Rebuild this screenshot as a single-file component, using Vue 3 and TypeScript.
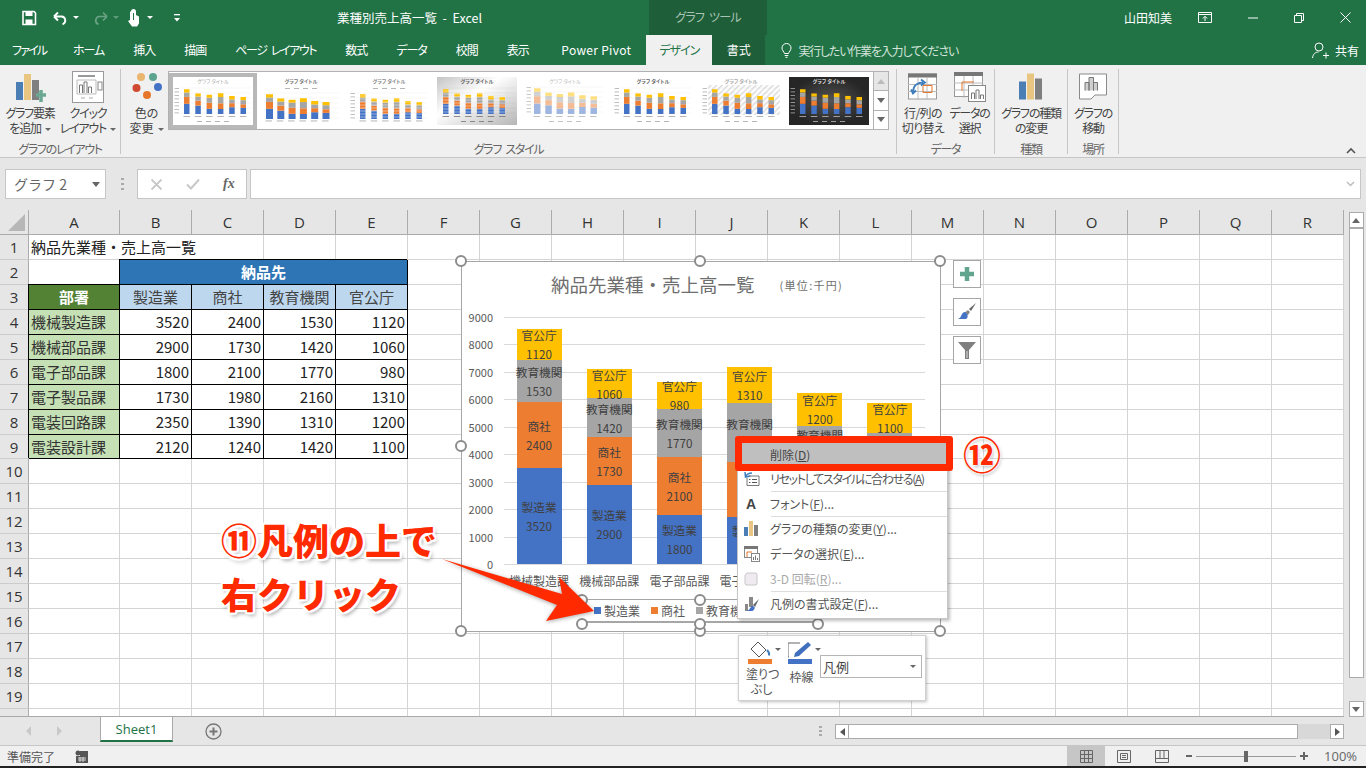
<script setup lang="ts">
type Cell = { text: string; cls: string }

const tabs = ['ファイル', 'ホーム', '挿入', '描画', 'ページ レイアウト', '数式', 'データ', '校閲', '表示', 'Power Pivot']
const columns = 'ABCDEFGHIJKLMNOPQR'.split('')
const depts = ['機械製造課', '機械部品課', '電子部品課', '電子製品課', '電装回路課', '電装設計課']
const series = [
  { name: '製造業', color: '#4472c4' },
  { name: '商社', color: '#ed7d31' },
  { name: '教育機関', color: '#a5a5a5' },
  { name: '官公庁', color: '#ffc000' },
]
const values = [
  [3520, 2400, 1530, 1120],
  [2900, 1730, 1420, 1060],
  [1800, 2100, 1770, 980],
  [1730, 1980, 2160, 1310],
  [2350, 1390, 1310, 1200],
  [2120, 1240, 1420, 1100],
]
const pxPerUnit = 246.7 / 9000
const axis = [9000, 8000, 7000, 6000, 5000, 4000, 3000, 2000, 1000, 0]

function rowCells(row: number): Cell[] {
  const out: Cell[] = []
  if (row === 1) {
    out.push({ text: '納品先業種・売上高一覧', cls: 'over' }, { text: '', cls: 'over' })
  } else if (row === 2) {
    out.push({ text: '', cls: '' }, { text: '納品先', cls: 'tb merged' })
  } else if (row === 3) {
    out.push({ text: '部署', cls: 'tb dept-head' })
    series.forEach((s) => out.push({ text: s.name, cls: 'tb sub-head' }))
  } else if (row >= 4 && row <= 9) {
    out.push({ text: depts[row - 4], cls: 'tb dept' })
    values[row - 4].forEach((v) => out.push({ text: String(v), cls: 'tb num' }))
  }
  const used = row === 2 ? 5 : out.length
  for (let i = used; i < columns.length; i++) out.push({ text: '', cls: '' })
  return out
}
const rows = Array.from({ length: 20 }, (_, i) => ({ n: i + 1, cells: rowCells(i + 1) }))

// グラフ スタイルのギャラリー
type Thumb = {
  bg: string; title: string; titleBold: boolean; legendTop: boolean; fade: number
  barW: number; x0: number; top: number; selected?: boolean; hatch?: boolean; stripes?: boolean; text: string
}
const thumbs: Thumb[] = [
  { bg: '#fff', title: '#aaa', titleBold: false, legendTop: false, fade: 1, barW: 5.5, x0: 11, top: 11, selected: true, text: '#999' },
  { bg: '#fff', title: '#777', titleBold: true, legendTop: true, fade: 1, barW: 7, x0: 5, top: 16, text: '#999' },
  { bg: '#fff', title: '#888', titleBold: true, legendTop: true, fade: 1, barW: 5.5, x0: 11, top: 16, stripes: true, text: '#999' },
  { bg: 'url(#sheen)', title: '#666', titleBold: true, legendTop: false, fade: 1, barW: 5.5, x0: 6, top: 11, stripes: true, text: '#666' },
  { bg: '#fff', title: '#bbb', titleBold: false, legendTop: false, fade: 0.5, barW: 6.5, x0: 9, top: 10, text: '#aaa' },
  { bg: '#fff', title: '#666', titleBold: true, legendTop: false, fade: 1, barW: 5.5, x0: 11, top: 11, text: '#999' },
  { bg: '#fff', title: '#aaa', titleBold: true, legendTop: false, fade: 1, barW: 5.5, x0: 11, top: 11, hatch: true, text: '#999' },
  { bg: 'url(#dark)', title: '#ddd', titleBold: true, legendTop: false, fade: 1, barW: 5.5, x0: 11, top: 11, text: '#ccc' },
]
function thumbBars(t: Thumb) {
  const base = t.legendTop ? 42 : 37
  const scale = (base - t.top) / 9000
  const rects: { x: number; y: number; h: number; c: string; w: number }[] = []
  values.forEach((vals, i) => {
    let y = base
    vals.forEach((v, j) => {
      const h = v * scale
      y -= h
      rects.push({ x: t.x0 + i * 11.3, y, h, c: series[j].color, w: t.barW })
    })
  })
  return rects
}

const handles = [
  [461, 261], [700, 261], [940, 261], [461, 446], [461, 631], [700, 631], [940, 631],
  [582, 600], [700, 600], [582, 624], [700, 624], [818, 624],
]
</script>

<template>
  <div class="app">
    <!-- タイトルバー -->
    <header class="titlebar">
      <div class="qat">
        <svg width="18" height="18" viewBox="0 0 18 18" class="save"><path d="M3 2.5h11l1.5 1.5v11.5H3z" fill="none" stroke="#fff" stroke-width="1.6" /><rect x="5.5" y="3" width="7" height="4" fill="#fff" /><rect x="5.5" y="10.5" width="7" height="4.5" fill="#fff" /></svg>
        <svg width="18" height="16" viewBox="0 0 18 16" class="undo"><path d="M3.5 6.5h7a4 4 0 0 1 1 7.8M3 6.500l4-4M3 6.500l4 4" fill="none" stroke="#fff" stroke-width="1.9" /></svg>
        <i class="caret sm white"></i>
        <svg width="18" height="16" viewBox="0 0 18 16" class="redo"><path d="M14.500 6.500h-7a4 4 0 0 0-1 7.800M15 6.500l-4-4M15 6.500l-4 4" fill="none" stroke="#6aa384" stroke-width="1.700" /></svg>
        <i class="caret sm dim"></i>
        <svg width="14" height="20" viewBox="0 0 14 20" class="touch"><path d="M5 3.500a2.500 2.500 0 0 1 5 0v3.500l3 1.500v7l-2 3H6l-4-5.500 2-1V3.500z" fill="#fff" /><path d="M7.500 5v7" stroke="#217346" stroke-width="1" /></svg>
        <i class="caret sm white gap"></i>
        <svg width="10" height="10" viewBox="0 0 10 10" class="custom"><rect x="2" y="1" width="6" height="1.300" fill="#fff" /><path d="M2 5h6L5 8.500z" fill="#fff" /></svg>
      </div>
      <div class="doc">業種別売上高一覧&nbsp; - &nbsp;Excel</div>
      <div class="context">グラフ ツール</div>
      <div class="user">山田知美</div>
      <svg class="win first" width="14" height="11" viewBox="0 0 14 11"><path d="M.5.500h13v10H.5zM.5 2.500h13M7 9V4.500M4.800 6.500L7 4.300l2.200 2.200" fill="none" stroke="#fff" /></svg>
      <svg class="win" width="10" height="10" viewBox="0 0 10 10"><path d="M0 5h10" stroke="#fff" /></svg>
      <svg class="win" width="10" height="10" viewBox="0 0 10 10"><path d="M.5 2.500h7v7h-7zM2.500 2.500v-2h7v7h-2" fill="none" stroke="#fff" /></svg>
      <svg class="win" width="11" height="11" viewBox="0 0 11 11"><path d="M.5.500l10 10M10.500.500l-10 10" stroke="#fff" /></svg>
    </header>

    <!-- タブ -->
    <nav class="tabs">
      <span v-for="t in tabs" :key="t" class="tab">{{ t }}</span>
      <span class="tab active">デザイン</span>
      <span class="tab dark">書式</span>
      <span class="tell">
        <svg width="11" height="15" viewBox="0 0 11 15"><path d="M3.500 10.500C3 8.500 1 7.500 1 5a4.500 4.500 0 0 1 9 0c0 2.500-2 3.500-2.500 5.500zM3.700 12.500h3.600M4.500 14.300h2" fill="none" stroke="#fff" /></svg>
        <span class="tell-text">実行したい作業を入力してください</span>
      </span>
      <span class="share">
        <svg width="17" height="17" viewBox="0 0 17 17"><circle cx="7" cy="5" r="4" fill="none" stroke="#fff" /><path d="M.5 16c.5-4 3-6 6-6M11 13.500h6M14 10.500v6" fill="none" stroke="#fff" /></svg>
        共有
      </span>
    </nav>

    <!-- リボン -->
    <section class="ribbon">
      <div class="group g1">
        <div class="btns">
          <div class="rbtn w-a">
            <svg width="32" height="32" viewBox="0 0 32 32"><rect x="2" y="11" width="7" height="18" fill="#4a7eb5" /><rect x="10" y="3" width="7" height="26" fill="#e9c582" /><rect x="18" y="9" width="7" height="20" fill="#7f7f7f" /><path d="M22 24h10M27 19v12" stroke="#6aa892" stroke-width="3.500" /></svg>
            <span>グラフ要素<br />を追加<i class="caret sm"></i></span>
          </div>
          <div class="rbtn w-b">
            <svg width="32" height="32" viewBox="0 0 32 32"><rect x=".5" y=".5" width="31" height="31" fill="#fff" stroke="#9a9a9a" /><path d="M6 5h17" stroke="#999" stroke-width="2" /><path d="M5 9h19v14H5z" fill="none" stroke="#bbb" /><path d="M7.500 22v-8h3v8M12 22V11h3v11M16.500 22v-6h3v6" fill="none" stroke="#777" /><rect x="26" y="11" width="4" height="8" fill="none" stroke="#888" /><path d="M9 27h4M17 27h4" stroke="#aaa" /></svg>
            <span>クイック<br />レイアウト<i class="caret sm"></i></span>
          </div>
        </div>
        <div class="glabel">グラフのレイアウト</div>
      </div>

      <div class="group g2">
        <div class="btns">
          <div class="rbtn w-c">
            <svg width="30" height="30" viewBox="0 0 30 30"><circle cx="9" cy="5" r="4" fill="#e9b56f" /><circle cx="21" cy="5" r="4" fill="#5ba58f" /><circle cx="4.500" cy="16" r="4" fill="#cf4a31" /><circle cx="26" cy="15" r="4" fill="#4472c4" /><circle cx="15" cy="23" r="4" fill="#e6772a" /></svg>
            <span>色の<br />変更<i class="caret sm"></i></span>
          </div>
          <div class="gallery">
            <div class="gallery-items">
              <div v-for="(t, i) in thumbs" :key="i" class="thumb" :class="{ selected: t.selected }">
                <svg width="80" height="48" viewBox="0 0 80 48">
                  <defs>
                    <linearGradient id="sheen" x1="0" y1="0" x2="1" y2="1"><stop offset="0" stop-color="#c4c4c4" /><stop offset=".4" stop-color="#fff" /><stop offset="1" stop-color="#b5b5b5" /></linearGradient>
                    <radialGradient id="dark"><stop offset="0" stop-color="#555" /><stop offset="1" stop-color="#262626" /></radialGradient>
                    <pattern id="hatch" width="4" height="4" patternUnits="userSpaceOnUse" patternTransform="rotate(45)"><rect width="1.500" height="4" fill="#ddd" /></pattern>
                  </defs>
                  <rect width="80" height="48" :fill="t.bg" />
                  <rect v-if="t.hatch" x="7" y="8" width="72" height="30" fill="url(#hatch)" />
                  <text x="40" y="6" class="mini" :fill="t.title" :font-weight="t.titleBold ? 700 : 400">グラフ タイトル</text>
                  <path v-for="g in 6" :key="g" :d="`M7 ${t.top + (g - 1) * 5}H78`" stroke="#000" stroke-opacity=".06" stroke-width=".6" />
                  <g :opacity="t.fade">
                    <rect v-for="(r, k) in thumbBars(t)" :key="k" :x="r.x" :y="r.y" :width="r.w" :height="r.h" :fill="r.c" />
                  </g>
                  <template v-if="t.stripes">
                    <path v-for="g in 8" :key="g" :d="`M${t.x0} ${t.top + g * 3}H${t.x0 + 62}`" stroke="#fff" stroke-opacity=".7" stroke-width=".6" />
                  </template>
                  <g :fill="t.text" fill-opacity=".8">
                    <rect v-for="g in 6" :key="g" :x="t.x0 - .5 + (g - 1) * 11.300" :y="t.legendTop ? 43.500 : 39" width="6.500" height=".9" />
                    <rect v-for="g in 4" :key="g" :x="24 + (g - 1) * 9" :y="t.legendTop ? 11 : 44" width="5" height=".9" />
                    <template v-if="t.x0 > 8">
                      <rect v-for="g in 8" :key="g" x="1.500" :y="t.top + (g - 1) * 3.500" width="4.500" height=".8" />
                    </template>
                  </g>
                </svg>
              </div>
            </div>
            <div class="gal-scroll">
              <span class="up"><i class="caret up-tri light"></i></span>
              <span><i class="caret"></i></span>
              <span class="more"><i class="caret"></i></span>
            </div>
          </div>
        </div>
        <div class="glabel">グラフ スタイル</div>
      </div>

      <div class="group g3">
        <div class="btns">
          <div class="rbtn w-d">
            <svg width="30" height="27" viewBox="0 0 30 27"><rect x=".5" y=".5" width="28" height="25" fill="#fff" stroke="#999" /><rect x="0" y="0" width="29" height="4" fill="#777" /><path d="M0 11h29M0 18h29M10 4v22M19 4v22" stroke="#bbb" /><path d="M15 12h9v7h-9z" fill="none" stroke="#e6772a" /><path d="M5 19c0-7 4-10 10-10M13 6l4 3-4 3M3 16l2 4 3-3" fill="none" stroke="#3e7ebd" stroke-width="1.800" /></svg>
            <span>行/列の<br />切り替え</span>
          </div>
          <div class="rbtn w-e">
            <svg width="32" height="30" viewBox="0 0 32 30"><rect x=".5" y=".5" width="28" height="24" fill="#fff" stroke="#999" /><rect x="0" y="0" width="29" height="4" fill="#777" /><path d="M0 11h29M0 18h29M10 4v22M19 4v22" stroke="#bbb" /><path d="M8 10h12M8 10v9" stroke="#e6772a" /><rect x="14.500" y="13.500" width="17" height="16" fill="#fff" stroke="#888" /><path d="M17.500 27v-6h3v6M22 27V18h3v9M26.500 27v-4h3v4" fill="none" stroke="#777" /></svg>
            <span>データの<br />選択</span>
          </div>
        </div>
        <div class="glabel">データ</div>
      </div>

      <div class="group g4">
        <div class="btns">
          <div class="rbtn w-f">
            <svg width="24" height="27" viewBox="0 0 24 27"><rect x="0" y="8" width="7" height="18" fill="#4a7eb5" /><rect x="8" y="0" width="7" height="26" fill="#e9c582" /><rect x="16" y="5" width="7" height="21" fill="#7f7f7f" /></svg>
            <span>グラフの種類<br />の変更</span>
          </div>
        </div>
        <div class="glabel">種類</div>
      </div>

      <div class="group g5">
        <div class="btns">
          <div class="rbtn w-g">
            <svg width="29" height="27" viewBox="0 0 29 27"><path d="M.5.500h27v21H16l-4 4H.5z" fill="#fff" stroke="#8a8a8a" /><path d="M6 17V9h4v8M10 17V4h4.500v13M14.500 17V9h4v8" fill="#cfcfcf" stroke="#777" /></svg>
            <span>グラフの<br />移動</span>
          </div>
        </div>
        <div class="glabel">場所</div>
      </div>
      <svg class="collapse" width="10" height="7" viewBox="0 0 10 7"><path d="M1 6l4-4 4 4" fill="none" stroke="#555" stroke-width="1.600" /></svg>
    </section>

    <!-- 数式バー -->
    <section class="formula">
      <div class="namebox">グラフ 2<i class="caret"></i></div>
      <div class="dots"></div>
      <div class="fxbox">
        <svg width="13" height="13" viewBox="0 0 13 13"><path d="M1.500 1.500l10 10M11.500 1.500l-10 10" stroke="#c8c8c8" stroke-width="1.800" /></svg>
        <svg width="14" height="12" viewBox="0 0 14 12"><path d="M1 6.500l4 4 8-9" fill="none" stroke="#c8c8c8" stroke-width="2" /></svg>
        <em>fx</em>
      </div>
      <div class="fxinput">
        <svg width="9" height="6" viewBox="0 0 9 6"><path d="M1 1l3.500 3.500L8 1" fill="none" stroke="#bdbdbd" stroke-width="1.500" /></svg>
      </div>
    </section>

    <!-- シート -->
    <main class="sheet">
      <div class="grid">
        <div class="corner"><i></i></div>
        <div v-for="c in columns" :key="c" class="colhead">{{ c }}</div>
        <template v-for="r in rows" :key="r.n">
          <div class="rowhead">{{ r.n }}</div>
          <div v-for="(cell, i) in r.cells" :key="i" class="cell" :class="cell.cls">{{ cell.text }}</div>
        </template>
      </div>
      <div class="vscroll">
        <span class="vbtn"><i class="caret up-tri"></i></span>
        <span class="vthumb"></span>
        <span class="vbtn end"><i class="caret"></i></span>
      </div>
    </main>

    <!-- シートタブ -->
    <section class="sheetbar">
      <svg class="nav" width="36" height="10" viewBox="0 0 36 10"><path d="M5 0v10L0 5zM31 0v10l5-5z" fill="#c8c8c8" /></svg>
      <div class="sheettab">Sheet1</div>
      <svg class="addsheet" width="17" height="17" viewBox="0 0 17 17"><circle cx="8.500" cy="8.500" r="7.500" fill="none" stroke="#777" stroke-width="1.300" /><path d="M8.500 4.500v8M4.500 8.500h8" stroke="#777" stroke-width="2" /></svg>
      <div class="hdots"></div>
      <div class="hscroll">
        <span class="hbtn"><i class="tri-l"></i></span>
        <span class="htrack"></span>
        <span class="hgap"></span>
        <span class="hbtn"><i class="tri-r"></i></span>
      </div>
    </section>

    <!-- ステータスバー -->
    <footer class="status">
      <span class="ready">準備完了</span>
      <svg class="macro" width="13" height="13" viewBox="0 0 13 13"><circle cx="3" cy="3" r="2.500" fill="#555" /><path d="M5 1h8v12H1V6h4z" fill="#555" /><path d="M3 8h8M3 10h8M5 7v5M8 7v5" stroke="#f0f0f0" stroke-width=".8" /></svg>
      <div class="views">
        <span class="view on"><svg width="13" height="13" viewBox="0 0 13 13"><path d="M.5.500h12v12H.5zM.5 4.500h12M.5 8.500h12M4.500.500v12M8.500.500v12" fill="none" stroke="#666" /></svg></span>
        <span class="view"><svg width="14" height="13" viewBox="0 0 14 13"><path d="M.5.500h13v12H.5zM3.500 3.500h7v6h-7zM5 5.500h4M5 7.500h4" fill="none" stroke="#666" /></svg></span>
        <span class="view"><svg width="14" height="13" viewBox="0 0 14 13"><path d="M.5.500h13v12H.5zM.5 8.500h13M5 .500v8M9 .500v8" fill="none" stroke="#666" /></svg></span>
      </div>
      <div class="zoom">
        <i class="zm"></i>
        <span class="slider"><b></b></span>
        <i class="zp"></i>
        <span class="pct">100%</span>
      </div>
    </footer>
    <div class="edge"></div>

    <!-- グラフ (シート上のオブジェクト) -->
    <div class="chart">
      <div class="chart-title">納品先業種・売上高一覧<small>(単位:千円)</small></div>
      <div class="plot-row">
        <div class="y-axis"><span v-for="a in axis" :key="a">{{ a }}</span></div>
        <div class="plot">
          <div class="gridlines"><i v-for="a in axis" :key="a"></i></div>
          <div v-for="(vals, i) in values" :key="i" class="bar-slot">
            <div class="stack">
              <div v-for="(v, j) in vals" :key="j" class="seg" :style="{ height: v * pxPerUnit + 'px', background: series[j].color }">
                <div class="seg-label">{{ series[j].name }}<br />{{ v }}</div>
              </div>
            </div>
          </div>
        </div>
      </div>
      <div class="cats"><span v-for="d in depts" :key="d">{{ d }}</span></div>
      <div class="legend">
        <span v-for="s in series" :key="s.name"><i :style="{ background: s.color }"></i>{{ s.name }}</span>
      </div>
    </div>
    <i v-for="(h, i) in handles" :key="i" class="handle" :style="{ left: h[0] - 6 + 'px', top: h[1] - 6 + 'px' }"></i>

    <div class="chart-tools">
      <span><svg width="16" height="16" viewBox="0 0 16 16"><path d="M8 1v14M1 8h14" stroke="#62a58e" stroke-width="4.500" /></svg></span>
      <span><svg width="20" height="20" viewBox="0 0 20 20"><path d="M19 1l-7 6 2 2z" fill="#666" /><path d="M11 8l2 2-2 3H8l-1-2z" fill="#888" /><path d="M8 10c-2 0-3 2-4 4-.5 2-2 2.500-3 3h8c2-1 2-3 1-5z" fill="#4472c4" /></svg></span>
      <span><svg width="19" height="19" viewBox="0 0 19 19"><path d="M0 1h18l-7 8v9H7V9z" fill="#7f7f7f" /><path d="M8.500 10v7h1v-7z" fill="#ddd" /></svg></span>
    </div>

    <!-- コンテキストメニュー -->
    <div class="menu">
      <div class="mi hot"><span>削除(<u>D</u>)</span></div>
      <div class="mi tight">
        <svg width="16" height="15" viewBox="0 0 16 15"><path d="M1 1l.5 5 5-1M1.500 5.500C3 3 5 2 8 2" fill="none" stroke="#3e7ebd" stroke-width="1.500" /><path d="M5 5h10v9.500H3V7" fill="none" stroke="#777" /><path d="M5 8.500h1.500M8 8.500h5M5 11.500h1.500M8 11.500h5" stroke="#555" /></svg>
        <span>リセットしてスタイルに合わせる(<u>A</u>)</span>
      </div>
      <div class="sep"></div>
      <div class="mi"><b class="aa">A</b><span>フォント(<u>F</u>)...</span></div>
      <div class="sep"></div>
      <div class="mi">
        <svg width="15" height="15" viewBox="0 0 15 15"><rect y="6" width="4" height="9" fill="#4a7eb5" /><rect x="5" width="4" height="15" fill="#e9c582" /><rect x="10" y="4" width="4" height="11" fill="#7f7f7f" /></svg>
        <span>グラフの種類の変更(<u>Y</u>)...</span>
      </div>
      <div class="mi">
        <svg width="16" height="16" viewBox="0 0 16 16"><rect x=".5" y=".5" width="13" height="11" fill="#fff" stroke="#888" /><rect width="14" height="3" fill="#777" /><path d="M3 6h5M3 6v5" stroke="#e6772a" /><rect x="7.500" y="7.500" width="8" height="8" fill="#fff" stroke="#888" /><path d="M9.500 14v-3M11.500 14V9.500M13.500 14v-2" stroke="#777" /></svg>
        <span>データの選択(<u>E</u>)...</span>
      </div>
      <div class="mi off">
        <svg width="14" height="14" viewBox="0 0 14 14"><path d="M1 3l2-2h9l1 2v9l-1 1H2l-1-1z" fill="#eeeaf0" stroke="#c8c8c8" /></svg>
        <span>3-D 回転(<u>R</u>)...</span>
      </div>
      <div class="sep"></div>
      <div class="mi">
        <svg width="16" height="16" viewBox="0 0 16 16"><rect x="1" y="8" width="3" height="7" fill="#888" /><rect x="5" y="1" width="4" height="10" fill="#888" /><path d="M15 3L9 9l2 2z" fill="#666" /><path d="M9 10c-2 0-2.500 2-3.500 3-.5 1-2 1.500-3 2h6c2-1 2.500-3 2-4z" fill="#4472c4" /></svg>
        <span>凡例の書式設定(<u>F</u>)...</span>
      </div>
    </div>

    <!-- ミニツールバー -->
    <div class="mini-bar">
      <div class="mini-btn">
        <svg width="24" height="23" viewBox="0 0 24 23"><path d="M10 1l8 8-7 7-8-8z" fill="#fff" stroke="#555" /><path d="M19 9c2 2 2.500 4 2 5.500" fill="none" stroke="#3e7ebd" stroke-width="2" /><rect y="18" width="24" height="5.500" fill="#ed7d31" /></svg>
        <i class="caret sm"></i>
        <span>塗りつ<br />ぶし</span>
      </div>
      <div class="mini-btn line">
        <svg width="24" height="23" viewBox="0 0 24 23"><path d="M12 2H0v14h1" fill="none" stroke="#666" /><path d="M20 1l3 3L11 15l-5 1 1-4z" fill="#3f6fbd" /><rect y="18" width="24" height="5.500" fill="#4472c4" /></svg>
        <i class="caret sm"></i>
        <span>枠線</span>
      </div>
      <div class="combo">凡例<i class="caret sm"></i></div>
    </div>

    <!-- 注釈 -->
    <div class="red-box"></div>
    <div class="num12">⑫</div>
    <svg class="arrow" width="180" height="90" viewBox="0 0 180 90"><path d="M1 9L121 44 118 27 153 61 105 71 116 55z" fill="#ff2a00" /></svg>
    <div class="note"><p>⑪凡例の上で</p><p>右クリック</p></div>
  </div>
</template>

<style>
html, body { margin: 0; background: #fff; overflow: hidden; }
</style>

<style scoped>
.app {
  position: relative; width: 1366px; height: 768px; overflow: hidden; display: flex; flex-direction: column;
  font-family: "Noto Sans CJK JP", "Open Sans", sans-serif; font-size: 12px; color: #444; font-feature-settings: "palt";
}
i { display: block; font-style: normal; }

/* 小さい三角 */
.caret { display: inline-block; width: 0; height: 0; border-left: 4.5px solid transparent; border-right: 4.5px solid transparent; border-top: 5px solid #666; }
.caret.sm { border-left-width: 3px; border-right-width: 3px; border-top-width: 3px; margin-left: 4px; vertical-align: middle; }
.caret.white { border-top-color: #fff; }
.caret.dim { border-top-color: #5f9c7c; }
.caret.up-tri { border-top: 0; border-bottom: 5px solid #666; }
.caret.light { border-bottom-color: #bbb; }

.titlebar { height: 35px; background: #217346; display: flex; align-items: center; color: #fff; flex: none; }
.qat { width: 337px; display: flex; align-items: center; padding-left: 20px; box-sizing: border-box; flex: none; }
.undo { margin-left: 13px; }
.redo { margin-left: 13px; }
.qat .caret.dim { margin-left: 3px; }
.touch { margin-left: 7px; }
.caret.gap { margin-left: 7px; }
.custom { margin-left: 19px; }
.doc { width: 312px; flex: none; font-size: 12.5px; }
.context { width: 118px; height: 35px; background: #1e5e38; color: #a9c4b4; line-height: 33px; text-align: center; flex: none; letter-spacing: -.8px; word-spacing: 3px; }
.user { margin-left: 357px; width: 48px; }
.win { flex: none; }
.win.first { margin-left: 26px; margin-right: 36px; }
.win + .win { margin-right: 36px; }
.win:last-child { margin-right: 0; }

.tabs { height: 30px; background: #217346; display: flex; flex: none; color: #fff; align-items: stretch; line-height: 29px; }
.tab { padding: 0 14.5px; white-space: nowrap; letter-spacing: -1px; }
.tab:first-child { padding: 0 12px 0 12px; letter-spacing: -1.8px; }
.tab:nth-child(5) { letter-spacing: -1.4px; word-spacing: 3px; }
.tab:nth-child(10) { letter-spacing: .3px; padding: 0 15px 0 18px; }
.tab.active { background: #f0f0f0; color: #217346; padding: 0; width: 66px; text-align: center; flex: none; }
.tab.dark { background: #1e5e38; padding: 0; width: 53px; text-align: center; flex: none; letter-spacing: 0; }
.tell { margin-left: 16px; display: flex; align-items: center; gap: 6px; color: #d3e3da; }
.tell-text { letter-spacing: -1.2px; }
.share { margin-left: auto; margin-right: 7px; display: flex; align-items: center; gap: 6px; color: #fff; }

.ribbon { height: 93px; background: #f0f0f0; border-bottom: 1px solid #c6c6c6; box-sizing: border-box; display: flex; position: relative; flex: none; }
.group { display: flex; flex-direction: column; border-right: 1px solid #c6c6c6; margin: 4px 0; height: 85px; box-sizing: border-box; flex: none; }
.g1 { width: 121px; } .g2 { width: 776px; } .g3 { width: 98px; } .g4 { width: 73px; } .g5 { width: 51px; }
.btns { height: 69px; flex: none; display: flex; }
.glabel { height: 16px; line-height: 21px; text-align: center; color: #666; letter-spacing: -1.3px; word-spacing: 3px; white-space: nowrap; }
.rbtn { display: flex; flex-direction: column; align-items: center; text-align: center; line-height: 15px; color: #444; flex: none; white-space: nowrap; letter-spacing: -1.2px; }
.rbtn svg { height: 34px; margin-top: 1px; margin-bottom: 1px; flex: none; overflow: visible; }
.w-a { width: 60px; } .w-b { width: 56px; }
.w-c { width: 47px; padding-left: 4px; box-sizing: border-box; letter-spacing: 0; }
.w-c svg { margin-top: 3px; margin-bottom: 3px; height: 30px; }
.w-d { width: 50px; margin-left: 1px; letter-spacing: -.6px; } .w-e { width: 43px; }
.w-f { width: 72px; } .w-g { width: 50px; }
.gallery { margin-top: 2px; width: 721px; height: 59px; border: 1px solid #b1b1b1; box-sizing: border-box; display: flex; background: #fff; }
.gallery-items { flex: 1; display: flex; gap: 8px; padding: 5px 0 0 4px; box-sizing: border-box; }
.thumb { width: 80px; height: 48px; position: relative; }
.thumb.selected { outline: 4px solid #b8b8b8; outline-offset: 0; }
.mini { font-size: 5px; text-anchor: middle; font-feature-settings: "palt"; }
.gal-scroll { width: 14px; display: flex; flex-direction: column; border-left: 1px solid #b1b1b1; }
.gal-scroll span { flex: 1; display: flex; align-items: center; justify-content: center; border-bottom: 1px solid #b1b1b1; }
.gal-scroll .up { background: #e6e6e6; }
.gal-scroll .more { border-bottom: 0; }
.collapse { position: absolute; right: 10px; top: 82px; }

.formula { height: 52px; background: #e6e6e6; display: flex; flex: none; padding: 11px 5px 11px 5px; box-sizing: border-box; }
.namebox { width: 101px; background: #fff; border: 1px solid #c6c6c6; box-sizing: border-box; font-size: 14px; color: #666; padding-left: 8px; line-height: 28px; display: flex; align-items: center; justify-content: space-between; padding-right: 5px; font-feature-settings: normal; }
.dots { width: 3px; height: 12px; margin: 9px 13px 0 15px; background: repeating-linear-gradient(#aaa 0 2px, transparent 2px 5px); }
.fxbox { width: 110px; background: #fff; border: 1px solid #c6c6c6; box-sizing: border-box; display: flex; align-items: center; gap: 23px; padding-left: 12px; margin-right: 3px; }
.fxbox em { font-family: "Liberation Serif", serif; font-size: 14px; font-weight: 700; color: #666; }
.fxinput { flex: 1; background: #fff; border: 1px solid #c6c6c6; box-sizing: border-box; display: flex; align-items: center; justify-content: flex-end; padding-right: 5px; }

.sheet { height: 507px; display: flex; flex: none; background: #e6e6e6; }
.grid { width: 1344px; height: 507px; overflow: hidden; display: grid; grid-template-columns: 29px 91px repeat(17, 72px); grid-template-rows: 25px; grid-auto-rows: 24.95px; background: #fff; font-feature-settings: normal; border-bottom: 1px solid #a9a9a9; box-sizing: border-box; }
.corner { background: #e6e6e6; border-right: 1px solid #ababab; border-bottom: 1px solid #ababab; position: relative; }
.corner i { position: absolute; right: 3px; bottom: 3px; width: 0; height: 0; border-left: 17px solid transparent; border-bottom: 17px solid #b7b7b7; }
.colhead { background: #e6e6e6; border-right: 1px solid #ababab; border-bottom: 1px solid #ababab; text-align: center; line-height: 24px; font-size: 15px; color: #333; font-family: "Open Sans", sans-serif; }
.rowhead { background: #e6e6e6; border-right: 1px solid #ababab; border-bottom: 1px solid #ccc; text-align: center; line-height: 24px; font-size: 15px; color: #333; font-family: "Open Sans", sans-serif; }
.cell { border-right: 1px solid #d4d4d4; border-bottom: 1px solid #d4d4d4; font-size: 15px; line-height: 24px; padding: 0 2px; white-space: nowrap; color: #222; min-width: 0; }
.cell.over { border-right-color: transparent; overflow: visible; }
.tb { border-right-color: #000; border-bottom-color: #000; box-shadow: -1px -1px 0 #000; }
.merged { grid-column: span 4; background: #2e75b6; color: #fff; font-weight: 700; text-align: center; }
.dept-head { background: #548235; color: #fff; font-weight: 700; text-align: center; }
.sub-head { background: #bdd7ee; text-align: center; color: #444; }
.dept { background: #c5e0b4; color: #333; }
.num { text-align: right; padding-right: 2px; }

.vscroll { width: 22px; display: flex; flex-direction: column; align-items: center; padding: 2px 0 0 2px; box-sizing: border-box; height: 507px; }
.vbtn { width: 15px; height: 16px; background: #fff; border: 1px solid #ababab; box-sizing: border-box; display: flex; align-items: center; justify-content: center; flex: none; }
.vthumb { width: 15px; height: 450px; background: #fff; border: 1px solid #ababab; box-sizing: border-box; flex: none; }
.vbtn.end { margin-top: auto; }

.sheetbar { height: 29px; background: #e6e6e6; display: flex; align-items: flex-start; flex: none; border-bottom: 1px solid #c6c6c6; box-sizing: border-box; }
.nav { margin: 9px 0 0 26px; flex: none; }
.sheettab { margin-left: 38px; width: 73px; height: 25px; background: #fff; border: 1px solid #a9a9a9; border-top: 0; border-bottom: 2px solid #217346; box-sizing: border-box; text-align: center; color: #217346; font-size: 13px; line-height: 25px; font-family: "Open Sans", sans-serif; flex: none; }
.addsheet { margin: 6px 0 0 32px; flex: none; }
.hdots { width: 3px; height: 10px; margin: 9px 0 0 597px; background: repeating-linear-gradient(#aaa 0 2px, transparent 2px 4px); flex: none; }
.hscroll { margin: 7px 0 0 13px; display: flex; height: 15px; width: 509px; flex: none; }
.hbtn { width: 14px; height: 15px; background: #fff; border: 1px solid #ababab; box-sizing: border-box; display: flex; align-items: center; justify-content: center; flex: none; }
.htrack { flex: none; width: 449px; background: #fff; border: 1px solid #ababab; border-left: 0; box-sizing: border-box; }
.hgap { flex: 1; background: #d8d8d8; }
.tri-l, .tri-r { width: 0; height: 0; border-top: 4px solid transparent; border-bottom: 4px solid transparent; }
.tri-l { border-right: 5px solid #555; }
.tri-r { border-left: 5px solid #555; }

.status { height: 20px; background: #f0f0f0; display: flex; align-items: center; flex: none; color: #555; }
.ready { margin-left: 7px; }
.macro { margin-left: 20px; }
.views { display: flex; margin-left: 979px; height: 20px; flex: none; }
.view { width: 38px; display: flex; align-items: center; justify-content: center; }
.view.on { background: #c6c6c6; }
.zoom { display: flex; align-items: center; margin-left: 5px; flex: none; }
.zm { width: 6px; height: 2px; background: #666; margin-right: 4px; }
.slider { width: 100px; height: 1px; background: #999; position: relative; }
.slider b { position: absolute; left: 48px; top: -5px; width: 4px; height: 11px; background: #666; }
.zp { width: 8px; height: 8px; margin-left: 4px; background: linear-gradient(#666, #666) center / 8px 2px no-repeat, linear-gradient(#666, #666) center / 2px 8px no-repeat; }
.pct { margin-left: 16px; font-family: "Open Sans", sans-serif; font-size: 13px; color: #666; }
.edge { height: 2px; background: #222; flex: none; }

/* グラフ */
.chart { position: absolute; left: 461px; top: 261px; width: 480px; height: 371px; background: #fff; border: 1.5px solid #a6a6a6; box-sizing: border-box; display: flex; flex-direction: column; font-feature-settings: normal; isolation: isolate; }
.chart-title { height: 55px; font-size: 18.5px; color: #6e6e6e; padding-left: 89px; line-height: 45px; white-space: nowrap; }
.chart-title small { font-size: 11px; letter-spacing: 1.3px; margin-left: 25px; vertical-align: 2px; }
.plot-row { display: flex; height: 247px; flex: none; }
.y-axis { width: 42px; box-sizing: border-box; padding-right: 11px; display: flex; flex-direction: column; justify-content: space-between; align-items: flex-end; margin: -8px 0; font-size: 11px; line-height: 16px; color: #595959; }
.plot { position: relative; width: 421px; display: flex; flex: none; }
.gridlines { position: absolute; inset: 0 0 -1px 0; display: flex; flex-direction: column; justify-content: space-between; }
.gridlines i { height: 1px; background: #d9d9d9; }
.bar-slot { flex: 1; position: relative; display: flex; justify-content: center; align-items: flex-end; }
.stack { width: 45px; display: flex; flex-direction: column-reverse; }
.seg { flex: none; display: flex; align-items: center; justify-content: center; }
.seg-label { position: relative; z-index: 1; font-size: 11.7px; line-height: 19px; color: #404040; text-align: center; white-space: nowrap; flex: none; }
.cats { height: 35px; margin-left: 42px; width: 421px; display: flex; flex: none; }
.cats span { flex: 1; text-align: center; font-size: 12px; line-height: 34px; color: #595959; white-space: nowrap; }
.legend { margin-left: 120px; width: 236px; height: 24px; border: 1px solid #a6a6a6; border-width: 1px 0 2px 0; box-sizing: border-box; display: flex; gap: 11px; padding-left: 12px; font-size: 12px; line-height: 22px; color: #595959; white-space: nowrap; overflow: hidden; }
.legend span { display: flex; align-items: center; gap: 3px; }
.legend i { width: 7px; height: 7px; }
.handle { position: absolute; width: 12px; height: 12px; border-radius: 50%; background: #fff; border: 2px solid #8c8c8c; box-sizing: border-box; }

.chart-tools { position: absolute; left: 953px; top: 260px; display: flex; flex-direction: column; gap: 10px; }
.chart-tools span { width: 28px; height: 28px; background: #fff; border: 1px solid #a6a6a6; box-sizing: border-box; display: flex; align-items: center; justify-content: center; }

/* メニュー */
.menu { position: absolute; left: 737px; top: 442px; width: 211px; height: 177px; background: #fff; border: 1px solid #c6c6c6; box-sizing: border-box; box-shadow: 2px 2px 3px rgba(0, 0, 0, .25); color: #555; }
.mi { height: 25px; display: flex; align-items: center; padding-left: 32px; position: relative; white-space: nowrap; }
.mi.tight { letter-spacing: -1.3px; }
.mi svg, .mi .aa { position: absolute; left: 6px; }
.mi .aa { left: 8px; font-size: 14px; color: #444; font-family: "Liberation Sans", sans-serif; }
.mi.hot { height: 23px; background: #bfbfbf; color: #444; }
.mi.off { color: #aaa; }
.sep { height: 1px; background: #ddd; margin: 0 0 -1px 33px; }

.mini-bar { position: absolute; left: 738px; top: 635px; width: 188px; height: 66px; background: #fff; border: 1px solid #d0d0d0; box-sizing: border-box; box-shadow: 1px 1px 3px rgba(0, 0, 0, .25); display: flex; padding: 5px 0 0 9px; }
.mini-btn { width: 29px; position: relative; text-align: center; line-height: 15px; color: #555; flex: none; margin-right: 11px; }
.mini-btn svg { display: block; margin-bottom: 2px; }
.mini-btn .caret { position: absolute; left: 23px; top: 7px; }
.mini-btn span { display: block; margin-left: -2px; white-space: nowrap; }
.mini-btn.line { margin-right: 0; }
.mini-btn.line span { margin-top: 5px; }
.combo { width: 102px; height: 23px; margin: 14px 0 0 3px; border: 1px solid #b5b5b5; box-sizing: border-box; padding-left: 2px; font-size: 13px; line-height: 19px; display: flex; justify-content: space-between; align-items: center; padding-right: 5px; color: #444; }

/* 注釈 */
.red-box { position: absolute; left: 735px; top: 436px; width: 218px; height: 35px; border: 7px solid #ff2a00; border-radius: 3px; box-sizing: border-box; }
.num12 { position: absolute; left: 960px; top: 426px; width: 44px; text-align: center; font-size: 38px; line-height: 54px; font-weight: 700; color: #ff2a00; text-shadow: 0 0 3px #fff, 0 0 3px #fff, 0 0 3px #fff, 1px 2px 3px rgba(0, 0, 0, .35); font-feature-settings: normal; }
.arrow { position: absolute; left: 441px; top: 550px; filter: drop-shadow(0 1px 2px rgba(0, 0, 0, .35)); }
.note {
  position: absolute; left: 221px; top: 512px; font-size: 36px; font-weight: 900; line-height: 54px; color: #ff2a00; white-space: nowrap; font-feature-settings: normal;
  text-shadow: 2px 0 1px #fff, -2px 0 1px #fff, 0 2px 1px #fff, 0 -2px 1px #fff, 2px 2px 1px #fff, -2px -2px 1px #fff, 2px -2px 1px #fff, -2px 2px 1px #fff, 2px 3px 4px rgba(0, 0, 0, .45);
}
.note p { margin: 0; }
</style>
